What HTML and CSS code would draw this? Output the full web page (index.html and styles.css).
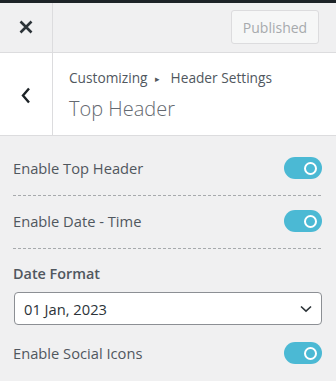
FILE: index.html
```html
<!DOCTYPE html>
<html lang="en">
<head>
    <meta charset="UTF-8">
    <meta name="viewport" content="width=device-width, initial-scale=1.0">
    <title>Customizer - Top Header</title>
    <link rel="stylesheet" href="styles.css">
</head>
<body>
    <div class="topline"></div>
    <div class="header">
        <a href="#" class="close-btn" aria-label="Close">
            <svg width="14" height="14" viewBox="0 0 14 14">
                <path d="M1.5 1.5 L12.5 12.5 M12.5 1.5 L1.5 12.5" stroke="#2c3338" stroke-width="2.6" fill="none"/>
            </svg>
        </a>
        <div class="header-actions">
            <button class="publish" disabled>Published</button>
        </div>
    </div>

    <div class="section-title">
        <a href="#" class="back-btn" aria-label="Back">
            <svg width="10" height="17" viewBox="0 0 10 17">
                <path d="M8 1.5 L2 8.5 L8 15.5" stroke="#1d2327" stroke-width="2.4" fill="none"/>
            </svg>
        </a>
        <div class="title-text">
            <div class="crumbs">Customizing <span class="arrow">&#9656;</span> Header Settings</div>
            <h1>Top Header</h1>
        </div>
    </div>

    <div class="controls">
        <div class="row">
            <span class="label">Enable Top Header</span>
            <span class="toggle"><span class="knob"></span></span>
        </div>
        <div class="row">
            <span class="label">Enable Date - Time</span>
            <span class="toggle"><span class="knob"></span></span>
        </div>
        <div class="field">
            <div class="field-title">Date Format</div>
            <div class="select">
                <span>01 Jan, 2023</span>
                <svg width="12" height="8" viewBox="0 0 12 8">
                    <path d="M1 1.5 L6 6.2 L11 1.5" stroke="#2c3338" stroke-width="1.6" fill="none"/>
                </svg>
            </div>
        </div>
        <div class="row last">
            <span class="label">Enable Social Icons</span>
            <span class="toggle"><span class="knob"></span></span>
        </div>
    </div>
</body>
</html>
```

FILE: styles.css
```css
body {
    margin: 0;
    font-family: "Open Sans", "Noto Sans", Arial, sans-serif;
    background-color: #f0f0f1;
    color: #50575e;
}

.topline {
    height: 3px;
    background-color: #1d2327;
}

.header {
    display: flex;
    height: 49px;
    border-bottom: 1px solid #dcdcde;
}

.close-btn,
.back-btn {
    width: 52px;
    flex-shrink: 0;
    display: flex;
    align-items: center;
    justify-content: center;
    border-right: 1px solid #dcdcde;
}

.close-btn svg {
    margin-top: -1px;
}

.header-actions {
    flex-grow: 1;
    display: flex;
    justify-content: flex-end;
    align-items: center;
    padding-right: 17px;
}

.publish {
    width: 88px;
    height: 34px;
    margin-top: -1px;
    font-family: inherit;
    font-size: 14px;
    color: #a7aaad;
    background-color: #f6f7f7;
    border: 1px solid #dcdcde;
    border-radius: 3px;
    padding: 0;
}

.section-title {
    display: flex;
    height: 82px;
    background-color: #fff;
    border-bottom: 1px solid #dcdcde;
}

.back-btn svg {
    margin-top: 2px;
}

.title-text {
    padding: 15px 0 0 16px;
}

.crumbs {
    font-size: 13.7px;
    line-height: 20px;
    color: #50575e;
}

.arrow {
    font-size: 9px;
    margin: 0 7px 0 4px;
    position: relative;
    top: -1px;
}

h1 {
    margin: 6px 0 0;
    font-size: 20px;
    font-weight: 300;
    line-height: 26px;
    color: #646970;
}

.controls {
    padding: 7px 14px 0 13px;
}

.row {
    display: flex;
    justify-content: space-between;
    align-items: center;
    padding: 14px 0 17px;
    /* dashed divider: 3px dash, 2px gap */
    background-image: linear-gradient(to right, #a7aaad 3px, transparent 3px);
    background-size: 5px 1px;
    background-repeat: repeat-x;
    background-position: left bottom;
}

.row.last {
    background-image: none;
    padding-top: 17px;
}

.label {
    font-size: 14.7px;
    line-height: 22px;
}

.toggle {
    width: 38px;
    height: 22px;
    border-radius: 11px;
    background-color: #4bb9d4;
    display: flex;
    align-items: center;
    justify-content: flex-end;
    padding-right: 5px;
    box-sizing: border-box;
}

.knob {
    width: 13px;
    height: 13px;
    border: 2px solid #fff;
    border-radius: 50%;
    box-sizing: border-box;
}

.field {
    padding-top: 15px;
}

.field-title {
    font-size: 14.4px;
    font-weight: 600;
    line-height: 20px;
    margin-bottom: 8px;
}

.select {
    margin-left: 1px;
    height: 33px;
    box-sizing: border-box;
    background-color: #fff;
    border: 1px solid #8c8f94;
    border-radius: 4px;
    display: flex;
    align-items: center;
    justify-content: space-between;
    padding: 0 9px 0 9px;
    font-size: 14.7px;
    color: #2c3338;
}
```
